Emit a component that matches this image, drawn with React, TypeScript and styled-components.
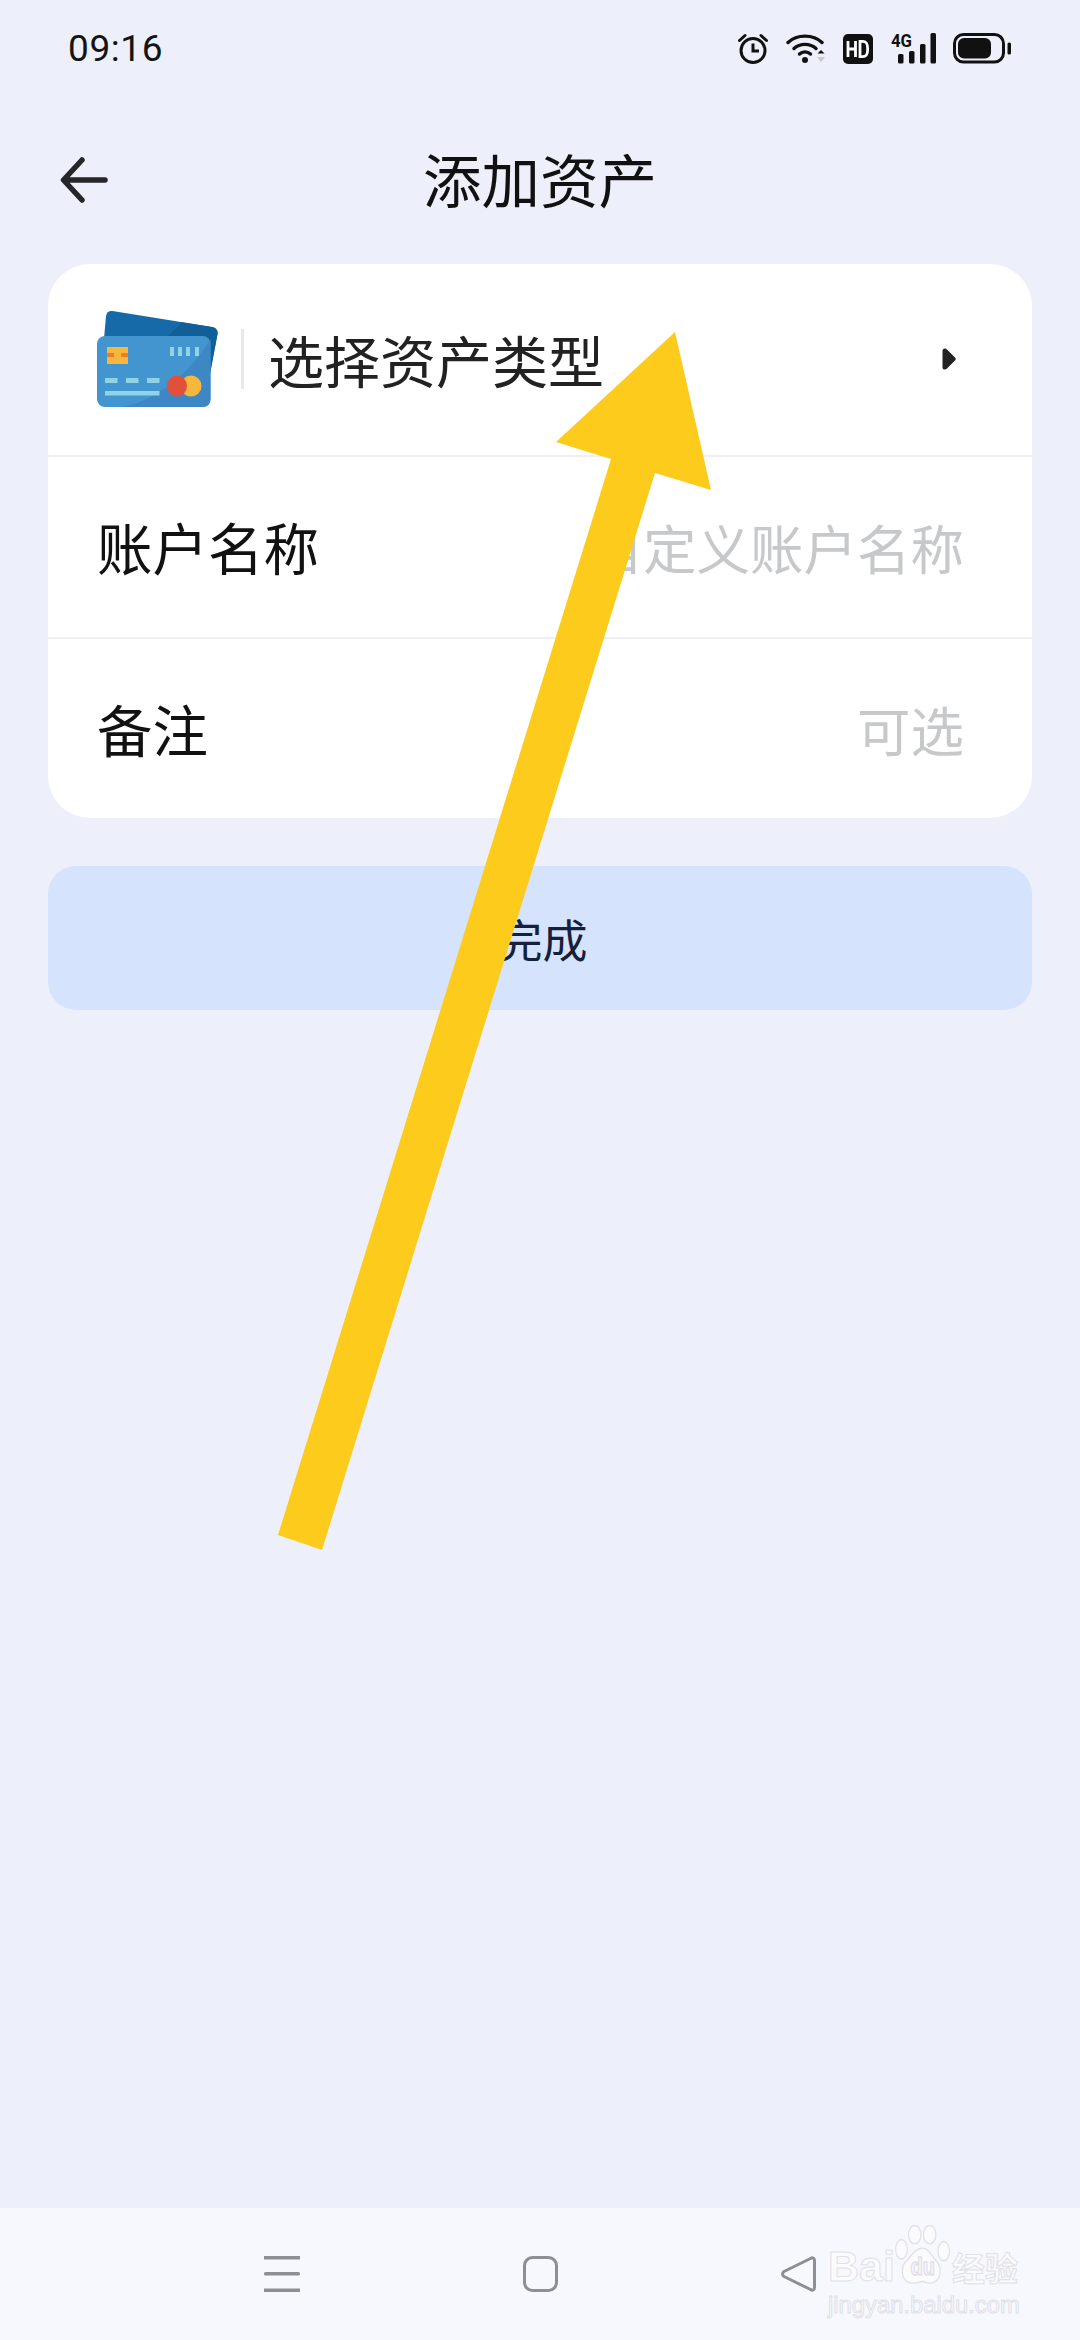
import styled, { createGlobalStyle } from "styled-components";

const CJK = `"Noto Sans CJK SC", "Noto Sans", sans-serif`;

const GlobalStyle = createGlobalStyle`
  html, body {
    margin: 0;
    padding: 0;
    background: #edf0fa;
  }
  * {
    box-sizing: border-box;
  }
`;

const Page = styled.div`
  position: relative;
  display: flex;
  flex-direction: column;
  width: 1080px;
  height: 2340px;
  overflow: hidden;
  background: #edf0fa;
  font-family: ${CJK};
`;

const StatusBar = styled.div`
  display: flex;
  justify-content: space-between;
  align-items: center;
  height: 96px;
  padding: 0 69px 0 68px;
  flex-shrink: 0;
`;

const Time = styled.span`
  font-family: Roboto, sans-serif;
  font-size: 37px;
  letter-spacing: 0.6px;
  color: #141414;
`;

const StatusIcons = styled.div`
  display: flex;
  align-items: flex-end;
  gap: 17.5px;
  margin-bottom: 6px;
`;

const Header = styled.div`
  display: grid;
  grid-template-columns: 1fr auto 1fr;
  align-items: center;
  height: 168px;
  padding: 0 60px;
  flex-shrink: 0;
`;

const BackButton = styled.div`
  display: flex;
  align-items: center;
`;

const Title = styled.h1`
  margin: 0 0 4px;
  font-size: 58.5px;
  font-weight: 400;
  line-height: 1;
  color: #111;
`;

const Card = styled.div`
  display: flex;
  flex-direction: column;
  margin: 0 48px;
  background: #fff;
  border-radius: 42px;
  flex-shrink: 0;
`;

const Row = styled.div<{ $height: number }>`
  display: flex;
  align-items: center;
  justify-content: space-between;
  height: ${({ $height }) => $height}px;
  padding: 0 68px 0 49px;
  border-bottom: 2px solid #eef0f3;
  &:last-child {
    border-bottom: none;
  }
`;

const TypeRow = styled(Row)`
  padding-right: 76px;
  padding-bottom: 2px;
`;

const TypeGroup = styled.div`
  display: flex;
  align-items: center;
`;

const Separator = styled.div`
  width: 3px;
  height: 60px;
  margin: 0 24px 0 23px;
  background: #e6e8ea;
`;

const TypeLabel = styled.span`
  font-size: 56px;
  line-height: 1;
  color: #222;
`;

const Label = styled.span`
  font-size: 55.5px;
  line-height: 1;
  color: #111;
`;

const Placeholder = styled.span`
  font-size: 53.5px;
  line-height: 1;
  color: #c6c8ca;
`;

const DoneButton = styled.div`
  display: flex;
  align-items: center;
  justify-content: center;
  height: 144px;
  margin: 48px 48px 0;
  padding-left: 5px;
  background: #d5e3fc;
  border-radius: 28px;
  font-size: 45px;
  color: #15203a;
  flex-shrink: 0;
`;

const Spacer = styled.div`
  flex: 1;
`;

const NavBar = styled.div`
  position: relative;
  display: flex;
  align-items: center;
  height: 132px;
  padding: 0 0 0 264px;
  background: #f7f8fe;
  flex-shrink: 0;
`;

const NavItem = styled.div<{ $gap: number }>`
  display: flex;
  margin-right: ${({ $gap }) => $gap}px;
`;

const Watermark = styled.div`
  position: absolute;
  left: 828px;
  top: 17px;
  width: 200px;
  color: #fbfbfe;
  -webkit-text-stroke: 1px #e0e0e6;
`;

const WatermarkLogo = styled.div`
  display: flex;
  align-items: flex-end;
  height: 64px;
`;

const WatermarkBrand = styled.span`
  font-family: "Liberation Sans", sans-serif;
  font-size: 43px;
  font-weight: 700;
  line-height: 46px;
`;

const WatermarkCn = styled.span`
  margin-left: 57px;
  font-size: 33px;
  font-weight: 700;
  line-height: 44px;
`;

const WatermarkUrl = styled.div`
  margin-top: 2px;
  font-family: "Liberation Sans", sans-serif;
  font-size: 23.8px;
  line-height: 28px;
  white-space: nowrap;
`;

const PawIcon = styled.svg`
  position: absolute;
  left: 66px;
  top: 0;
`;

const ArrowOverlay = styled.svg`
  position: absolute;
  left: 0;
  top: 0;
  pointer-events: none;
`;

const AlarmIcon = () => (
  <svg width="30" height="31" viewBox="0 0 30 31" fill="none" stroke="#111">
    <circle cx="15" cy="17.500" r="12" strokeWidth="3" />
    <path d="M15 10.500v7.500h6" strokeWidth="3" />
    <path d="M1.500 7.500 7 2.500M28.500 7.500 23 2.500" strokeWidth="3" strokeLinecap="round" />
  </svg>
);

const WifiIcon = () => (
  <svg width="40" height="31" viewBox="0 0 40 31" fill="none">
    <path d="M2 9.500C11 1 27 1 36 9.500" stroke="#111" strokeWidth="3.400" strokeLinecap="round" />
    <path d="M8 15.500C14 10 24 10 30 15.500" stroke="#111" strokeWidth="3.400" strokeLinecap="round" />
    <path d="M13.500 21C16.500 18.200 21.500 18.200 24.500 21" stroke="#111" strokeWidth="3.400" strokeLinecap="round" />
    <circle cx="19" cy="27" r="3" fill="#111" />
    <path d="M31.500 20.500l3.500-3.500 3.500 3.500z" fill="#111" />
    <path d="M31 24h8l-4 5.500z" fill="#c8cad0" />
  </svg>
);

const HdIcon = () => (
  <svg width="30" height="30" viewBox="0 0 30 30">
    <rect width="30" height="30" rx="5" fill="#111" />
    <path d="M5 7v16M12.500 7v16M5 15H12.500" stroke="#fff" strokeWidth="2.800" fill="none" />
    <path d="M17 7.300v15.400h2.500c3.800 0 5.200-2 5.200-7.700s-1.400-7.700-5.200-7.700z" stroke="#fff" strokeWidth="2.800" fill="none" />
  </svg>
);

const SignalIcon = () => (
  <svg width="45" height="37" viewBox="0 0 45 37">
    <text
      x="0"
      y="20"
      fontFamily="Roboto, sans-serif"
      fontSize="19"
      fontWeight="700"
      fill="#111"
      textLength="21"
      lengthAdjust="spacingAndGlyphs"
    >
      4G
    </text>
    <rect x="7" y="27" width="5.500" height="9.500" rx="1.500" fill="#111" />
    <rect x="18" y="24" width="5.500" height="12.500" rx="1.500" fill="#111" />
    <rect x="29" y="17" width="5.500" height="19.500" rx="1.500" fill="#111" />
    <rect x="39.500" y="6" width="5.500" height="30.500" rx="1.500" fill="#111" />
  </svg>
);

const BatteryIcon = () => (
  <svg width="58" height="31" viewBox="0 0 58 31">
    <rect x="1.500" y="1.500" width="49" height="27.500" rx="9" fill="none" stroke="#111" strokeWidth="3" />
    <rect x="5" y="5" width="33" height="20.500" rx="6" fill="#111" />
    <rect x="54.500" y="9.500" width="3.500" height="12" rx="1.500" fill="#111" />
  </svg>
);

const BackIcon = () => (
  <svg width="48" height="46" viewBox="0 0 48 46" fill="none" stroke="#26262a" strokeWidth="5.500" strokeLinecap="round" strokeLinejoin="round">
    <path d="M45 23H4M22 3 3.500 23 22 43" />
  </svg>
);

const CardIcon = () => (
  <svg width="121" height="98" viewBox="0 0 121 98">
    <path d="M9 6c.6-3.500 3-5.500 6.500-5L115 17c4 .7 6 3.500 5.500 7l-9.500 50H3z" fill="#166aa8" />
    <path d="M85 12.200 115 17c4 .7 6 3.500 5.500 7L113 64 70 27z" fill="#125f98" />
    <rect x="0" y="26" width="113.500" height="71" rx="8" fill="#4395d0" />
    <path d="M25 97c40-8 72-40 88.500-68V89c0 5-3 8-8 8z" fill="#3d88c4" />
    <rect x="10" y="37" width="21" height="17" fill="#f6b73c" />
    <rect x="10" y="43" width="7" height="4" fill="#ee7a2c" />
    <rect x="24" y="43" width="7" height="4" fill="#ee7a2c" />
    <path d="M73 37h4v9h-4zM81 37h4v9h-4zM89 37h4v9h-4zM98 37h4v9h-4z" fill="#8fd3e4" />
    <path d="M8 68h12.500v5H8zM29 68h12.500v5H29zM50 68h12.500v5H50zM8 81h54.500v4.500H8z" fill="#8fd3e4" />
    <circle cx="94" cy="76" r="10.500" fill="#f6b73c" />
    <ellipse cx="80" cy="76" rx="10" ry="10.500" fill="#e2503a" />
  </svg>
);

const ChevronIcon = () => (
  <svg width="14" height="22" viewBox="0 0 14 22">
    <path d="M2.500 0.500C3.500 0.500 4.500 1 5 1.500L13 9.500C14 10.500 14 11.500 13 12.500L5 20.500C3.500 22 0.500 22 0.500 19.500V3C0.500 1.500 1.500 0.500 2.500 0.500Z" fill="#222" />
  </svg>
);

const MenuIcon = () => (
  <svg width="36" height="36" viewBox="0 0 36 36" fill="#8e8e93">
    <rect y="0" width="36" height="3.500" />
    <rect y="16" width="36" height="3.500" rx="1.500" />
    <rect y="32.500" width="36" height="3.500" />
  </svg>
);

const HomeIcon = () => (
  <svg width="35" height="36" viewBox="0 0 35 36" fill="none" stroke="#8e8e93" strokeWidth="3">
    <rect x="1.500" y="1.500" width="32" height="33" rx="8" />
  </svg>
);

const ReturnIcon = () => (
  <svg width="35" height="36" viewBox="0 0 35 36" fill="none" stroke="#8e8e93" strokeWidth="3" strokeLinejoin="round">
    <path d="M29.500 2.500C31.500 1 33.500 2 33.500 4.500V31.500C33.500 34 31.500 35 29.500 33.500L3 20.500C1 19 1 17 3 15.500Z" />
  </svg>
);

const PawMark = () => (
  <PawIcon width="58" height="62" viewBox="0 0 70 64" preserveAspectRatio="none" fill="#fbfbfe" stroke="#e0e0e6" strokeWidth="1.500">
    <ellipse cx="25" cy="10" rx="7.500" ry="9.500" />
    <ellipse cx="43" cy="10" rx="7.500" ry="9.500" />
    <ellipse cx="9" cy="25" rx="7" ry="10" />
    <ellipse cx="60" cy="27" rx="7" ry="10" />
    <path d="M34 24c8 0 11 8 17 13 7 6 7 22-7 23-5 .4-8-2-10-2s-6 2-11 2C9 60 7 46 14 38c6-5 11-14 20-14z" />
    <text x="20" y="52" fontFamily="Liberation Sans, sans-serif" fontSize="24" fontWeight="700">du</text>
  </PawIcon>
);

export default function App() {
  return (
    <Page>
      <GlobalStyle />
      <StatusBar>
        <Time>09:16</Time>
        <StatusIcons>
          <AlarmIcon />
          <WifiIcon />
          <HdIcon />
          <SignalIcon />
          <BatteryIcon />
        </StatusIcons>
      </StatusBar>
      <Header>
        <BackButton>
          <BackIcon />
        </BackButton>
        <Title>添加资产</Title>
      </Header>
      <Card>
        <TypeRow $height={193}>
          <TypeGroup>
            <CardIcon />
            <Separator />
            <TypeLabel>选择资产类型</TypeLabel>
          </TypeGroup>
          <ChevronIcon />
        </TypeRow>
        <Row $height={182}>
          <Label>账户名称</Label>
          <Placeholder>自定义账户名称</Placeholder>
        </Row>
        <Row $height={179}>
          <Label>备注</Label>
          <Placeholder>可选</Placeholder>
        </Row>
      </Card>
      <DoneButton>完成</DoneButton>
      <Spacer />
      <NavBar>
        <NavItem $gap={223}>
          <MenuIcon />
        </NavItem>
        <NavItem $gap={223}>
          <HomeIcon />
        </NavItem>
        <NavItem $gap={0}>
          <ReturnIcon />
        </NavItem>
        <Watermark>
          <WatermarkLogo>
            <WatermarkBrand>Bai</WatermarkBrand>
            <WatermarkCn>经验</WatermarkCn>
          </WatermarkLogo>
          <PawMark />
          <WatermarkUrl>jingyan.baidu.com</WatermarkUrl>
        </Watermark>
      </NavBar>
      <ArrowOverlay width="1080" height="2340" viewBox="0 0 1080 2340">
        <path d="M675 332 711 490 655 473 322 1550 278 1535 611 459 556 442Z" fill="#fdcb1c" />
      </ArrowOverlay>
    </Page>
  );
}
